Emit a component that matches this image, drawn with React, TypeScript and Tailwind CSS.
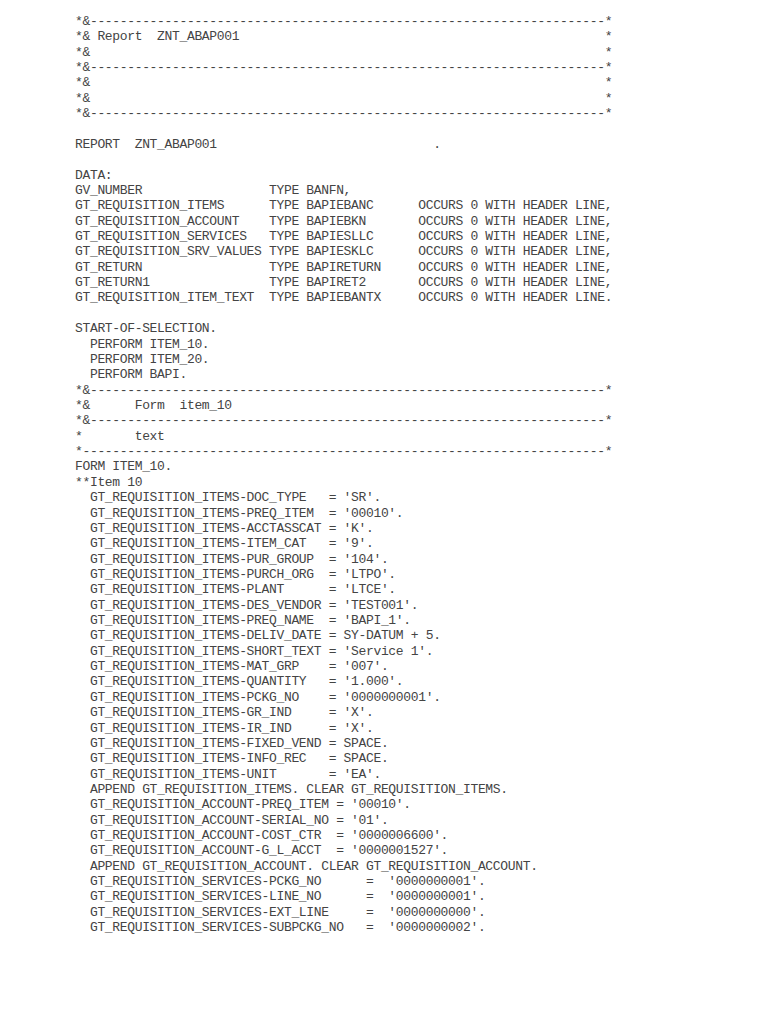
const pad = (s: string, n: number) => s + ' '.repeat(Math.max(0, n - s.length))

const rule = '*&' + '-'.repeat(69) + '*'
const box = (s: string) => pad(s, 71) + '*'

const dataDecl: [string, string, boolean][] = [
  ['GT_REQUISITION_ITEMS', 'BAPIEBANC', false],
  ['GT_REQUISITION_ACCOUNT', 'BAPIEBKN', false],
  ['GT_REQUISITION_SERVICES', 'BAPIESLLC', false],
  ['GT_REQUISITION_SRV_VALUES', 'BAPIESKLC', false],
  ['GT_RETURN', 'BAPIRETURN', false],
  ['GT_RETURN1', 'BAPIRET2', false],
  ['GT_REQUISITION_ITEM_TEXT', 'BAPIEBANTX', true],
]

const items: [string, string][] = [
  ['DOC_TYPE', "'SR'"],
  ['PREQ_ITEM', "'00010'"],
  ['ACCTASSCAT', "'K'"],
  ['ITEM_CAT', "'9'"],
  ['PUR_GROUP', "'104'"],
  ['PURCH_ORG', "'LTPO'"],
  ['PLANT', "'LTCE'"],
  ['DES_VENDOR', "'TEST001'"],
  ['PREQ_NAME', "'BAPI_1'"],
  ['DELIV_DATE', 'SY-DATUM + 5'],
  ['SHORT_TEXT', "'Service 1'"],
  ['MAT_GRP', "'007'"],
  ['QUANTITY', "'1.000'"],
  ['PCKG_NO', "'0000000001'"],
  ['GR_IND', "'X'"],
  ['IR_IND', "'X'"],
  ['FIXED_VEND', 'SPACE'],
  ['INFO_REC', 'SPACE'],
  ['UNIT', "'EA'"],
]

const account: [string, string][] = [
  ['PREQ_ITEM', "'00010'"],
  ['SERIAL_NO', "'01'"],
  ['COST_CTR', "'0000006600'"],
  ['G_L_ACCT', "'0000001527'"],
]

const services: [string, string][] = [
  ['PCKG_NO', "'0000000001'"],
  ['LINE_NO', "'0000000001'"],
  ['EXT_LINE', "'0000000000'"],
  ['SUBPCKG_NO', "'0000000002'"],
]

const lines: string[] = [
  rule,
  box('*& Report  ZNT_ABAP001'),
  box('*&'),
  rule,
  box('*&'),
  box('*&'),
  rule,
  '',
  pad('REPORT  ZNT_ABAP001', 48) + '.',
  '',
  'DATA:',
  pad('GV_NUMBER', 26) + 'TYPE BANFN,',
  ...dataDecl.map(
    ([n, t, last]) => pad(pad(n, 26) + 'TYPE ' + t, 46) + 'OCCURS 0 WITH HEADER LINE' + (last ? '.' : ',')
  ),
  '',
  'START-OF-SELECTION.',
  '  PERFORM ITEM_10.',
  '  PERFORM ITEM_20.',
  '  PERFORM BAPI.',
  rule,
  '*&      Form  item_10',
  rule,
  '*       text',
  '*' + '-'.repeat(70) + '*',
  'FORM ITEM_10.',
  '**Item 10',
  ...items.map(([f, v]) => pad('  GT_REQUISITION_ITEMS-' + f, 33) + ' = ' + v + '.'),
  '  APPEND GT_REQUISITION_ITEMS. CLEAR GT_REQUISITION_ITEMS.',
  ...account.map(([f, v]) => pad('  GT_REQUISITION_ACCOUNT-' + f, 34) + ' = ' + v + '.'),
  '  APPEND GT_REQUISITION_ACCOUNT. CLEAR GT_REQUISITION_ACCOUNT.',
  ...services.map(([f, v]) => pad('  GT_REQUISITION_SERVICES-' + f, 39) + '=  ' + v + '.'),
]

export default function App() {
  return (
    <div className="min-h-[1024px] w-[768px] bg-white pl-[75px] pt-[14px]">
      <pre className="whitespace-pre font-['Liberation_Mono',monospace] text-[13px] leading-[15.36px] tracking-[-0.34px] text-[#444]">
        {lines.join('\n')}
      </pre>
    </div>
  )
}
